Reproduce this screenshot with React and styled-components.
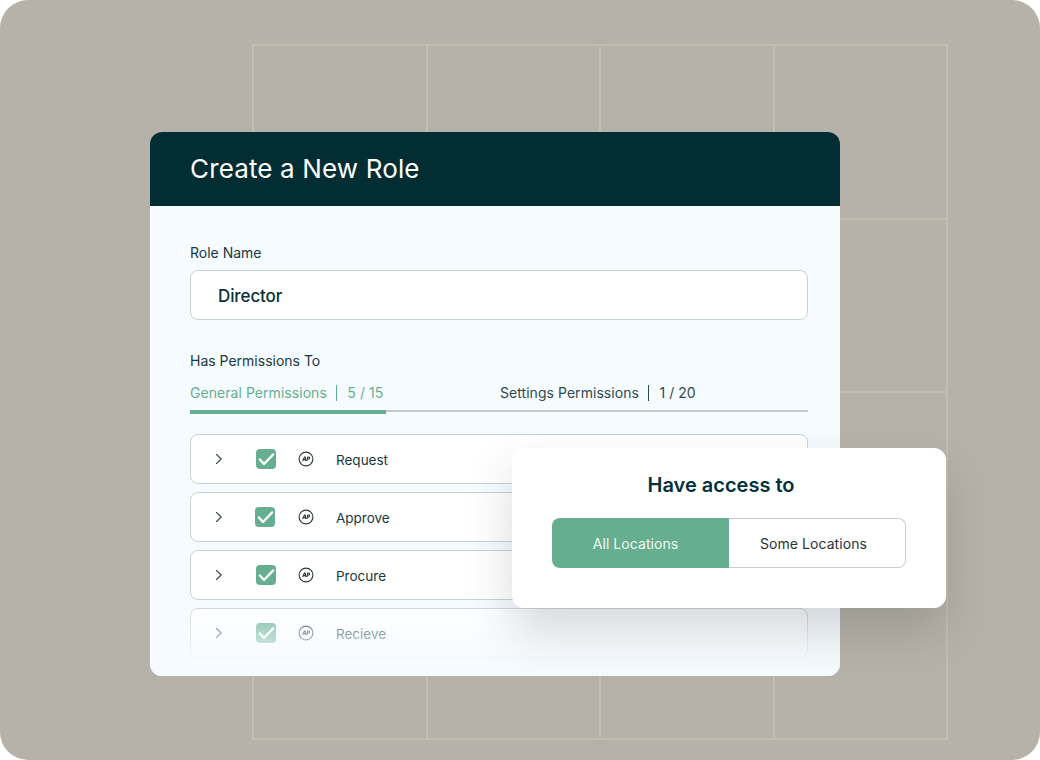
import React from "react";
import styled, { createGlobalStyle } from "styled-components";

const Global = createGlobalStyle`
  html, body { margin: 0; padding: 0; background: #fff; }
  body { font-family: Inter, "Liberation Sans", sans-serif; -webkit-font-smoothing: antialiased; }
  * { box-sizing: border-box; }
`;

const Canvas = styled.div`
  position: relative;
  width: 1040px;
  height: 760px;
  overflow: hidden;
  border-radius: 28px;
  background: #b7b2a9;
  padding: 132px 0 0 150px;
`;

const Backdrop = styled.div`
  position: absolute;
  left: 252px;
  top: 44px;
  width: 696px;
  height: 696px;
  display: grid;
  grid-template-columns: repeat(4, 1fr);
  grid-template-rows: repeat(4, 1fr);
  border-top: 2px solid #c2beae;
  border-left: 2px solid #c2beae;
`;

const Tile = styled.div`
  border-right: 2px solid #c2beae;
  border-bottom: 2px solid #c2beae;
`;

const Card = styled.section`
  position: relative;
  width: 690px;
  height: 544px;
  border-radius: 12px;
  overflow: hidden;
  background: #f6fbff;
  display: flex;
  flex-direction: column;
`;

const Header = styled.header`
  height: 74px;
  flex: none;
  background: #022e33;
  display: flex;
  align-items: center;
  padding: 0 40px;
`;

const Title = styled.h1`
  margin: 0;
  color: #fff;
  font-size: 26px;
  line-height: 1;
  font-weight: 400;
  letter-spacing: 0.14px;
`;

const Body = styled.div`
  padding: 38px 32px 0 40px;
  display: flex;
  flex-direction: column;
`;

const Label = styled.label`
  display: block;
  color: #17393f;
  font-size: 14px;
  line-height: 18px;
`;

const RoleInput = styled.div`
  margin-top: 8px;
  height: 50px;
  background: #fff;
  border: 1px solid #c5d3d6;
  border-radius: 8px;
  display: flex;
  align-items: center;
  padding: 2px 0 0 27px;
  color: #0a2f35;
  font-size: 17px;
  font-weight: 500;
  letter-spacing: -0.1px;
`;

const PermLabel = styled(Label)`
  margin-top: 32px;
`;

const Tabs = styled.div`
  margin-top: 11px;
  display: flex;
  height: 31px;
  border-bottom: 2px solid #c1cbcc;
`;

const Tab = styled.div`
  width: ${(p) => p.$w}px;
  height: 33px;
  flex: none;
  padding: 3px 0 0 ${(p) => p.$pad}px;
  display: flex;
  align-items: flex-start;
  font-size: 14px;
  line-height: 18px;
  letter-spacing: 0.05px;
  color: ${(p) => (p.$active ? "#65ae8f" : "#2f4a4f")};
  border-bottom: ${(p) => (p.$active ? "4px solid #65ae8f" : "none")};
`;

const Divider = styled.span`
  width: 1.5px;
  height: 16px;
  margin: 1px 10px 0 9px;
  background: currentColor;
`;

const List = styled.div`
  margin-top: 22px;
  display: flex;
  flex-direction: column;
  gap: 8px;
`;

const Row = styled.div`
  height: 50px;
  background: #fff;
  border: 1px solid #c5d3d6;
  border-radius: 8px;
  display: flex;
  align-items: center;
  padding-left: 24px;
  color: #17393f;
  font-size: 13.5px;
`;

const RowName = styled.span`
  padding-top: 2px;
`;

const Chevron = styled.svg`
  width: 8px;
  height: 12px;
  flex: none;
  margin-right: 33px;
`;

const Check = styled.svg`
  width: 20px;
  height: 20px;
  flex: none;
  margin-right: 22px;
  transform: translateX(${(p) => p.$nudge || 0}px);
`;

const Badge = styled.svg`
  width: 16px;
  height: 16px;
  flex: none;
  margin-right: 22px;
`;

const Fade = styled.div`
  position: absolute;
  left: 0;
  right: 0;
  bottom: 0;
  height: 72px;
  background: linear-gradient(
    to bottom,
    rgba(246, 251, 255, 0.1) 0%,
    rgba(246, 251, 255, 0.88) 75%,
    rgba(246, 251, 255, 0.98) 100%
  );
  pointer-events: none;
`;

const Popover = styled.aside`
  position: absolute;
  left: 512px;
  top: 448px;
  width: 434px;
  height: 160px;
  background: #fff;
  border-radius: 12px;
  padding: 24px 40px 0;
  box-shadow: 0 24px 48px rgba(40, 44, 48, 0.18);
`;

const PopTitle = styled.h2`
  margin: 0;
  padding-right: 16px;
  text-align: center;
  color: #03303a;
  font-size: 20px;
  line-height: 26px;
  font-weight: 600;
`;

const Segments = styled.div`
  margin-top: 20px;
  display: flex;
  height: 50px;
`;

const AllButton = styled.button`
  width: 177px;
  border: 0;
  padding: 0 10px 0 0;
  border-radius: 8px 0 0 8px;
  background: #65ae8f;
  color: #f2f8f5;
  font: 400 14px Inter, sans-serif;
  letter-spacing: 0.06px;
`;

const SomeButton = styled.button`
  flex: 1;
  padding: 0 7px 0 0;
  border: 1px solid #c9cdcf;
  border-left: 0;
  border-radius: 0 8px 8px 0;
  background: #fff;
  color: #2b3336;
  font: 400 14px Inter, sans-serif;
  letter-spacing: 0.06px;
`;

const rows = [
  { name: "Request" },
  { name: "Approve", nudge: -1 },
  { name: "Procure" },
  { name: "Recieve" },
];

function PermissionRow({ name, nudge }) {
  return (
    <Row>
      <Chevron viewBox="0 0 8 12" fill="none">
        <path d="M1.5 1.5 6.2 6l-4.7 4.5" stroke="#3c4a4c" strokeWidth="1.1" strokeLinecap="round" strokeLinejoin="round" />
      </Chevron>
      <Check viewBox="0 0 20 20" fill="none" $nudge={nudge}>
        <rect width="20" height="20" rx="4" fill="#65ae8f" />
        <path d="M3.8 10.4 8 15 17.2 5.4" stroke="#fff" strokeWidth="2.3" strokeLinecap="round" strokeLinejoin="round" />
      </Check>
      <Badge viewBox="0 0 16 16" fill="none">
        <circle cx="8" cy="8" r="6.9" stroke="#2c3537" strokeWidth="1.1" />
        <path d="M4.6 10 6.5 6h.8l.5 4M5.6 8.6h2.1M9 10l.7-4h1.1c1 0 1 2-.2 2H9.5" stroke="#2c3537" strokeWidth="1.1" strokeLinejoin="round" />
      </Badge>
      <RowName>{name}</RowName>
    </Row>
  );
}

export default function App() {
  return (
    <>
      <Global />
      <Canvas>
        <Backdrop>
          {Array.from({ length: 16 }, (_, i) => (
            <Tile key={i} />
          ))}
        </Backdrop>
        <Card>
          <Header>
            <Title>Create a New Role</Title>
          </Header>
          <Body>
            <Label>Role Name</Label>
            <RoleInput>Director</RoleInput>
            <PermLabel>Has Permissions To</PermLabel>
            <Tabs>
              <Tab $active $w={196} $pad={0}>
                General Permissions<Divider />5 / 15
              </Tab>
              <Tab $w={422} $pad={114}>
                Settings Permissions<Divider />1 / 20
              </Tab>
            </Tabs>
            <List>
              {rows.map((r) => (
                <PermissionRow key={r.name} {...r} />
              ))}
            </List>
          </Body>
          <Fade />
        </Card>
        <Popover>
          <PopTitle>Have access to</PopTitle>
          <Segments>
            <AllButton>All Locations</AllButton>
            <SomeButton>Some Locations</SomeButton>
          </Segments>
        </Popover>
      </Canvas>
    </>
  );
}
